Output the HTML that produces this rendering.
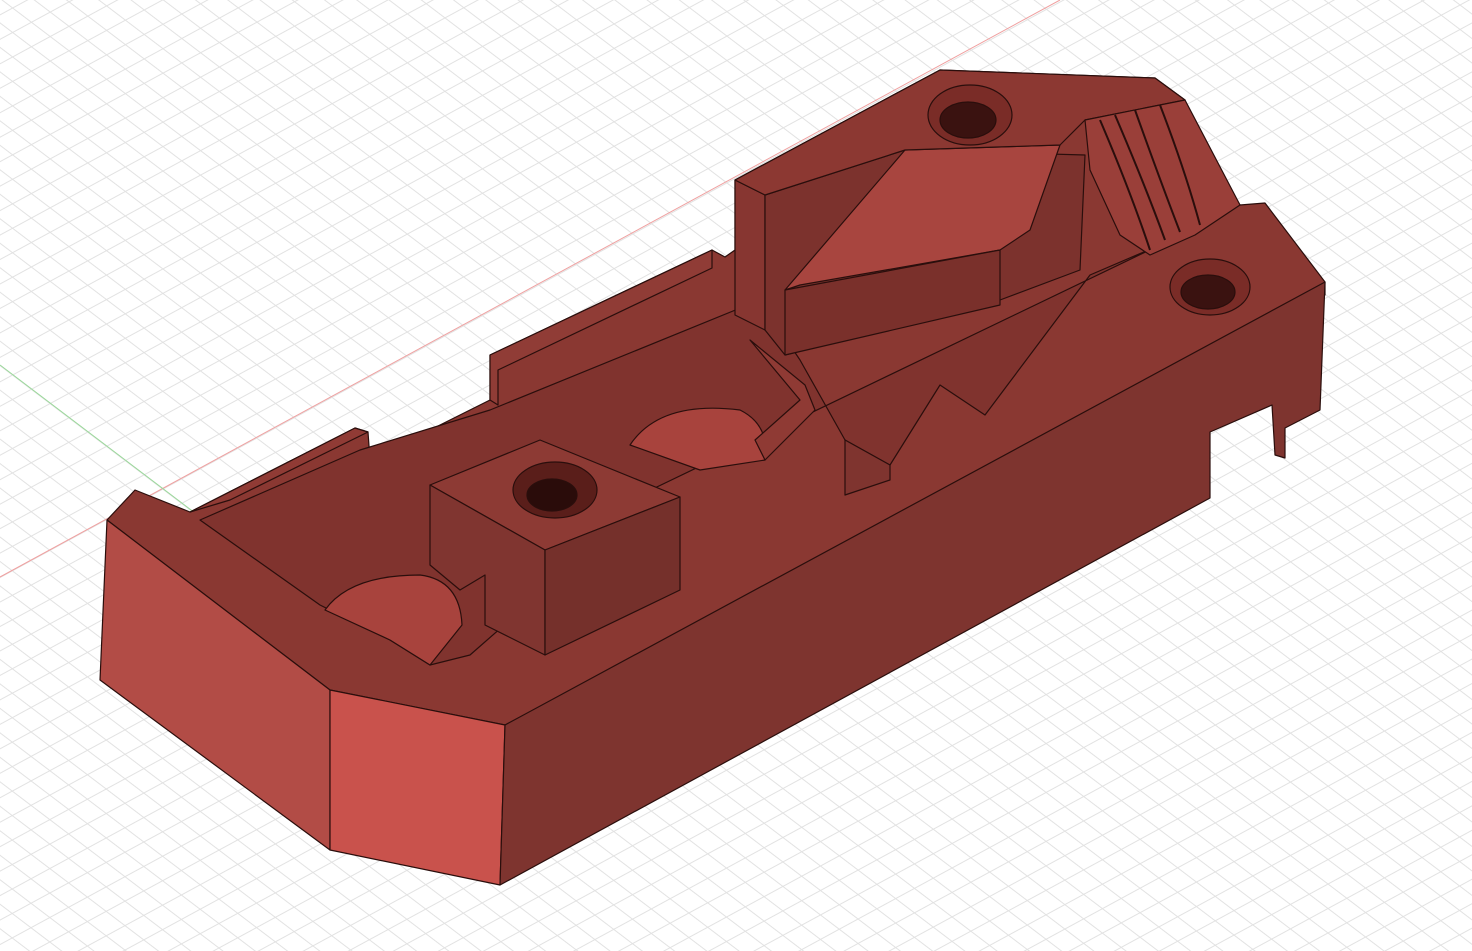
<!DOCTYPE html>
<html><head><meta charset="utf-8"><style>
html,body{margin:0;padding:0;background:#fff;width:1472px;height:951px;overflow:hidden}
svg{display:block}
</style></head><body>
<svg width="1472" height="951" viewBox="0 0 1472 951" xmlns="http://www.w3.org/2000/svg">
<defs>
<pattern id="p1" width="2000" height="21.5" patternUnits="userSpaceOnUse" patternTransform="translate(0,577) rotate(-28.5)">
<line x1="0" y1="0.5" x2="2000" y2="0.5" stroke="#e2e2e2" stroke-width="1"/>
</pattern>
<pattern id="p2" width="2000" height="19.5" patternUnits="userSpaceOnUse" patternTransform="translate(0,365) rotate(37.2)">
<line x1="0" y1="0.5" x2="2000" y2="0.5" stroke="#e2e2e2" stroke-width="1"/>
</pattern>
</defs>
<rect width="1472" height="951" fill="url(#p1)"/>
<rect width="1472" height="951" fill="url(#p2)"/>
<line x1="0" y1="577" x2="1060" y2="0" stroke="#f0a0a0" stroke-width="1"/>
<line x1="0" y1="365" x2="560" y2="790" stroke="#9ad89a" stroke-width="1"/>
<g stroke="#2a0e0c" stroke-width="1.2" stroke-linejoin="round">
<polygon fill="#8a3832" points="107,520 135,490 190,512 355,428 368,432 370,460 490,400 490,355 712,250 725,257 735,250 735,180 940,70 1155,78 1185,100 1185,112 1240,205 1265,203 1325,282 1325,295 505,725 330,690"/>
<polygon fill="#b24c46" points="107,520 330,690 330,850 100,680"/>
<polygon fill="#c9524c" points="330,690 505,725 500,885 330,850"/>
<polygon fill="#7e342f" points="505,725 1325,282 1320,410 1285,428 1285,458 1275,455 1272,405 1210,432 1210,498 500,885"/>
<polygon fill="#80332e" points="200,520 360,450 490,410 760,300 800,360 845,440 890,465 940,385 985,415 1090,275 1160,245 505,560 510,620 470,655 430,665 390,640 320,605"/>
<polygon fill="#903b35" points="190,512 355,428 368,432 230,500"/>
<polygon fill="#903c36" points="490,355 712,250 712,268 498,370 498,405 490,400"/>
<polygon fill="#873631" points="735,180 765,195 765,330 735,315"/>
<polygon fill="#7c322d" points="765,195 905,150 1085,155 1080,270 1000,300 785,355 765,330"/>
<polygon fill="#a8453f" points="785,290 905,150 1060,145 1030,230 1000,250 800,285"/>
<polygon fill="#7a302b" points="785,290 1000,250 1000,305 785,355"/>
<polygon fill="#8c3832" points="735,180 940,70 1155,78 1185,100 1085,120 1060,145 905,150 765,195"/>
<polygon fill="#9a3f39" points="1085,120 1185,100 1240,205 1195,235 1150,255 1120,235 1090,170"/>
<path d="M1100,120 Q1130,190 1150,250 M1115,115 Q1145,185 1165,240 M1135,110 Q1160,180 1180,232 M1160,105 Q1185,170 1200,225" fill="none" stroke-width="2"/>
<polygon fill="#8d3a34" points="430,485 540,440 680,497 545,550"/>
<polygon fill="#803530" points="430,485 545,550 545,655 485,625 485,575 460,590 430,565"/>
<polygon fill="#75302b" points="545,550 680,497 680,590 545,655"/>
<ellipse cx="555" cy="490" rx="42" ry="28" fill="#5a1e1a"/>
<ellipse cx="552" cy="495" rx="25" ry="16" fill="#2a0c0a"/>
<path d="M325,610 Q350,575 420,575 Q460,580 462,625 L430,665 L390,640 Z" fill="#a8433d"/>
<path d="M630,445 Q660,400 740,410 Q770,425 765,460 L700,470 Z" fill="#a8433d"/>
<polygon fill="#8f3a34" points="750,340 805,385 815,410 765,460 755,440 800,400"/>
<polygon fill="#7f342f" points="845,440 890,465 890,480 845,495"/>
<ellipse cx="970" cy="115" rx="42" ry="30" fill="#7a2c27"/>
<ellipse cx="968" cy="120" rx="28" ry="18" fill="#3a1210"/>
<ellipse cx="1210" cy="287" rx="40" ry="28" fill="#7a2c27"/>
<ellipse cx="1208" cy="292" rx="27" ry="17" fill="#3a1210"/>
</g>
</svg>
</body></html>
